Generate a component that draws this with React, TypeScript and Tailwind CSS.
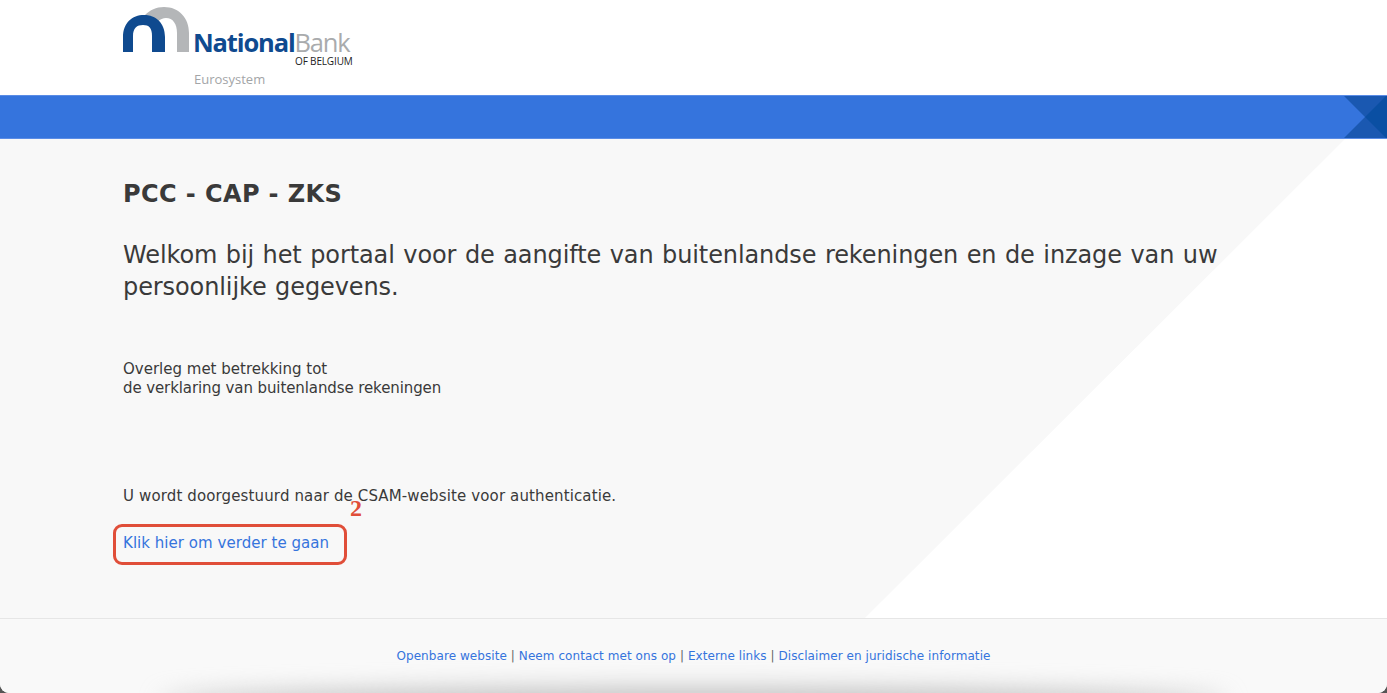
import React from 'react';

const footerLinks = ['Openbare website', 'Neem contact met ons op', 'Externe links', 'Disclaimer en juridische informatie'];

const Logo = () => (
  <div className="flex items-start">
    <svg width="66" height="46" viewBox="0 0 66 46" className="mt-[7px] shrink-0">
      <path d="M22 8 C27 3 33 0 41 0 C56 0 66 11 66 26 V45 H54 V26 C54 17 50 11 43 11 C40 11 37 12 35 15 C32 11 27 8 22 8 Z" fill="#b4b6b8" />
      <path d="M0 45 V30 C0 16 9 8 21 8 C33 8 42 16 42 30 V45 H29 V29 C29 21 26 18 20 18 C14 18 10 21 10 29 V45 Z" fill="#0f4a8f" />
    </svg>
    <div className="mt-[27px] ml-[4px] flex flex-col items-end">
      <div className="flex items-baseline font-['Open_Sans',sans-serif] text-[25.5px] leading-[30px] tracking-[-1.15px]">
        <span className="font-bold text-[#0f4a8f]">National</span>
        <span className="font-normal text-[#a9abad]">Bank</span>
      </div>
      <span className="mt-[-1px] mr-[-3px] font-['Open_Sans',sans-serif] text-[10px] leading-[11px] font-normal tracking-[-0.15px] text-[#222]">OF BELGIUM</span>
    </div>
  </div>
);

export default function App() {
  return (
    <div className="flex h-[693px] w-[1387px] flex-col overflow-hidden bg-[#555] font-['DejaVu_Sans',sans-serif]">
      <div className="relative flex h-full flex-col overflow-hidden rounded-b-[9px] bg-white">
        <header className="h-[95px] shrink-0 bg-white pl-[123px]">
          <Logo />
          <p className="mt-[3px] ml-[71px] font-['Open_Sans',sans-serif] text-[13px] leading-[18px] text-[#a3a5a7]">Eurosystem</p>
        </header>

        <div className="relative h-[44px] shrink-0 overflow-hidden border-y border-[#5a8ce6] bg-[#3574dd]">
          <svg width="44" height="44" viewBox="0 0 44 44" className="absolute top-[-1px] right-0">
            <path d="M0 0 H44 V44 H0 L22 22 Z" fill="#1a58b1" />
            <path d="M44 0 V44 L22 22 Z" fill="#0a4fa3" />
          </svg>
        </div>

        <main className="relative h-[480px] shrink-0 overflow-hidden border-b border-[#e6e6e6] bg-[#f8f8f8] px-[123px] pt-[40px] text-[#3a3a3a]">
          <div className="absolute inset-0 bg-white [clip-path:polygon(1345px_0,100%_0,100%_100%,865px_100%)]" />
          <div className="relative">
            <h1 className="text-[24px] leading-[30px] font-bold tracking-[0.4px]">PCC - CAP - ZKS</h1>
            <p className="mt-[30px] w-[1110px] text-[24px] leading-[32px] tracking-[-0.1px] [word-spacing:1px]">Welkom bij het portaal voor de aangifte van buitenlandse rekeningen en de inzage van uw persoonlijke gegevens.</p>
            <p className="mt-[57px] text-[15px] leading-[19px]">Overleg met betrekking tot<br /><span className="tracking-[-0.1px]">de verklaring van buitenlandse rekeningen</span></p>
            <p className="mt-[89px] text-[15px] leading-[19px] tracking-[0.13px]">U wordt doorgestuurd naar de CSAM-website voor authenticatie.</p>
            <div className="relative mt-[18px] ml-[-10px] flex h-[41px] w-[234px] items-center rounded-[9px] border-[3px] border-[#e04e39] pb-[3px] pl-[7px]">
              <a href="#" className="text-[15px] leading-[19px] tracking-[0.04px] text-[#3574dd]">Klik hier om verder te gaan</a>
              <span className="absolute top-[-33px] left-[234px] font-['Liberation_Serif',serif] text-[24px] leading-[28px] font-bold text-[#e04e39]">2</span>
            </div>
          </div>
        </main>

        <footer className="relative flex-1 overflow-hidden bg-[#f9f9f9] pt-[28px] text-center text-[12px] leading-[18px] tracking-[0.07px] text-[#666]">
          <div className="absolute right-[160px] bottom-[-22px] left-[160px] h-[26px] rounded-[50%] bg-[#bbb] blur-[12px]" />
          <div className="relative">
            {footerLinks.map((link, i) => (
              <React.Fragment key={link}>
                {i > 0 && ' | '}
                <a href="#" className="text-[#3574dd]">{link}</a>
              </React.Fragment>
            ))}
          </div>
        </footer>
      </div>
    </div>
  );
}
